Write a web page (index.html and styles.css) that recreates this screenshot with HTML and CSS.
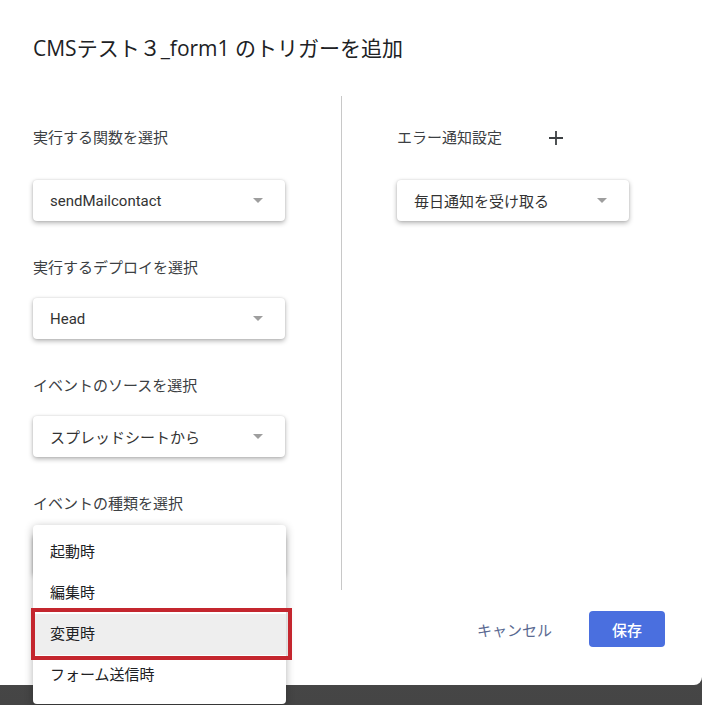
FILE: index.html
```html
<!DOCTYPE html>
<html lang="ja">
<head>
    <meta charset="UTF-8">
    <meta name="viewport" content="width=device-width, initial-scale=1.0">
    <title>トリガーを追加</title>
    <link rel="stylesheet" href="styles.css">
</head>
<body>

<div class="dialog">
    <h1 class="title">CMSテスト３_form1 のトリガーを追加</h1>

    <div class="main">
        <div class="col col-left">
            <div class="field first">
                <div class="label">実行する関数を選択</div>
                <div class="select wide"><span>sendMailcontact</span><i class="arrow"></i></div>
            </div>
            <div class="field">
                <div class="label">実行するデプロイを選択</div>
                <div class="select wide"><span>Head</span><i class="arrow"></i></div>
            </div>
            <div class="field">
                <div class="label">イベントのソースを選択</div>
                <div class="select wide"><span>スプレッドシートから</span><i class="arrow"></i></div>
            </div>
            <div class="field">
                <div class="label">イベントの種類を選択</div>
                <!-- covered by the open menu below -->
                <div class="select wide"><span></span><i class="arrow"></i></div>
            </div>
        </div>
        <div class="divider"></div>
        <div class="col col-right">
            <div class="field first">
                <div class="label">エラー通知設定
                    <svg class="plus" width="14" height="14" viewBox="0 0 14 14">
                        <path d="M7 0v14M0 7h14" stroke="#3c4043" stroke-width="1.8" fill="none"/>
                    </svg>
                </div>
                <div class="select narrow"><span>毎日通知を受け取る</span><i class="arrow"></i></div>
            </div>
        </div>
    </div>

    <div class="footer">
        <button class="btn-text">キャンセル</button>
        <button class="btn-primary">保存</button>
    </div>
</div>

<!-- open dropdown for event type -->
<ul class="menu">
    <li>起動時</li>
    <li>編集時</li>
    <li class="active">変更時<span class="mark"></span></li>
    <li>フォーム送信時</li>
</ul>

</body>
</html>
```

FILE: styles.css
```css
body {
    margin: 0;
    height: 705px;
    overflow: hidden;
    background: linear-gradient(#5c5c5c, #454545);
    font-family: Roboto, "Noto Sans CJK JP", sans-serif;
    color: #3c4043;
    position: relative;
}
.dialog {
    background: #fff;
    width: 702px;
    height: 685px;
    border-radius: 0 0 8px 0;
    box-sizing: border-box;
    padding: 34px 0 0 33px;
}
.title {
    margin: 0;
    font-family: "Open Sans", "Noto Sans CJK JP", sans-serif;
    font-size: 21px;
    font-weight: 400;
    line-height: 28px;
    color: #202124;
}
.main {
    display: grid;
    grid-template-columns: 308px 1px 1fr;
    height: 494px;
    margin-top: 34px;
}
.divider {
    background: #c8c8c8;
}
.col-right {
    padding-left: 55px;
}
.field {
    margin-top: 37px;
}
.field.first {
    margin-top: 32px;
}
.label {
    font-size: 15px;
    line-height: 20px;
    display: flex;
    align-items: center;
}
.plus {
    margin-left: 47px;
}
.select {
    margin-top: 20px;
    height: 41px;
    box-sizing: border-box;
    padding: 0 22px 0 17px;
    display: flex;
    align-items: center;
    justify-content: space-between;
    background: #fff;
    border-radius: 4px;
    box-shadow: 0 2px 5px rgba(0, 0, 0, 0.3), 0 0 2px rgba(0, 0, 0, 0.12);
    font-size: 15px;
    color: #333;
}
.field.first .select {
    margin-top: 32px;
}
.wide {
    width: 252px;
}
.narrow {
    width: 232px;
}
.arrow {
    width: 0;
    height: 0;
    border-left: 5px solid transparent;
    border-right: 5px solid transparent;
    border-top: 5px solid #9e9e9e;
}
.footer {
    display: flex;
    justify-content: flex-end;
    align-items: center;
    gap: 21px;
    padding-right: 37px;
    margin-top: 21px;
}
.btn-text {
    background: none;
    border: none;
    font-family: inherit;
    font-size: 15px;
    color: #5b6a92;
    padding: 0 16px;
    height: 36px;
}
.btn-primary {
    background: #4a6fdf;
    color: #fff;
    border: none;
    border-radius: 4px;
    width: 76px;
    height: 36px;
    font-family: inherit;
    font-size: 15px;
    font-weight: 500;
}
.menu {
    position: absolute;
    left: 33px;
    top: 525px;
    width: 253px;
    margin: 0;
    padding: 7px 0 8px;
    list-style: none;
    background: #fff;
    border-radius: 4px;
    box-shadow: 0 2px 8px rgba(0, 0, 0, 0.3);
}
.menu li {
    height: 41px;
    line-height: 41px;
    padding-left: 17px;
    font-size: 15px;
    color: #202124;
    position: relative;
}
.menu li.active {
    background: #eeeeee;
}
.mark {
    position: absolute;
    left: -2px;
    right: -6px;
    top: -6px;
    bottom: -5px;
    border: 4px solid #c4262e;
}
```
